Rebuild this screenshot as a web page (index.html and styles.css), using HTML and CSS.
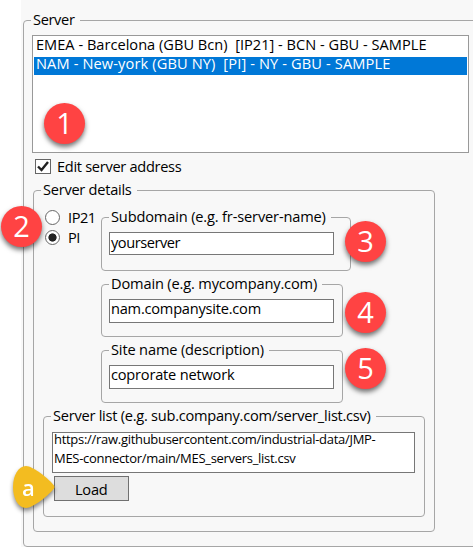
FILE: index.html
```
<!DOCTYPE html>
<html lang="en">
<head>
<meta charset="utf-8">
<title>Server</title>
<link rel="stylesheet" href="styles.css">
</head>
<body>
<main class="panel">
  <fieldset class="group server">
    <legend class="tight">Server</legend>
    <div class="listbox">
      <div class="row">EMEA - Barcelona (GBU Bcn)&nbsp; [IP21] - BCN - GBU - SAMPLE</div>
      <div class="row selected">NAM - New-york (GBU NY)&nbsp; [PI] - NY - GBU - SAMPLE</div>
    </div>
    <div class="check">
      <svg class="checkbox" width="16" height="15" viewBox="0 0 16 15"><rect x=".5" y=".5" width="15" height="14" fill="#fff" stroke="#666"/><path d="M3 7.5 6.5 11 13 3" fill="none" stroke="#222" stroke-width="2.4"/></svg>
      <span>Edit server address</span>
    </div>
    <fieldset class="group details">
      <legend>Server details</legend>
      <div class="columns">
        <div class="radios">
          <div class="option"><i class="radio"></i><span>IP21</span></div>
          <div class="option"><i class="radio on"></i><span>PI</span></div>
        </div>
        <div class="fields">
          <fieldset class="group subdomain">
            <legend>Subdomain (e.g. fr-server-name)</legend>
            <div class="input short">yourserver</div>
          </fieldset>
          <fieldset class="group field">
            <legend>Domain (e.g. mycompany.com)</legend>
            <div class="input host">nam.companysite.com</div>
          </fieldset>
          <fieldset class="group field">
            <legend>Site name (description)</legend>
            <div class="input">coprorate network</div>
          </fieldset>
        </div>
      </div>
      <fieldset class="group source">
        <legend>Server list (e.g. sub.company.com/server_list.csv)</legend>
        <div class="textarea"><div class="url">https://raw.githubusercontent.com/industrial-data/JMP-<br>MES-connector/main/MES_servers_list.csv</div></div>
        <div class="button">Load</div>
      </fieldset>
    </fieldset>
  </fieldset>
</main>
<span class="badge one">1</span>
<span class="badge two">2</span>
<span class="badge three">3</span>
<span class="badge four">4</span>
<span class="badge five">5</span>
<div class="marker">
  <svg width="42" height="42" viewBox="0 0 42 42"><path d="M13 0C20 0 36 13 41 19.500Q42 21 41 22.500C36 29 20 42 13 42C5 42 0 32 0 21S5 0 13 0Z" fill="#f3bc20"/></svg>
  <span>a</span>
</div>
</body>
</html>
```
FILE: styles.css
```
* { box-sizing: border-box; }
body {
  margin: 0;
  padding-left: 21px;
  position: relative;
  width: 473px;
  height: 547px;
  overflow: hidden;
  background: #fff;
  font: 14.6px/20px "Open Sans", "Noto Sans", sans-serif;
  letter-spacing: -.26px;
  color: #000;
}
.panel {
  width: 452px;
  height: 547px;
  padding: 10px 0 0 2px;
  background: #f8f8f8;
  overflow: hidden;
}
.group {
  min-width: 0;
  margin: 0;
  padding: 0 0 0 7px;
  border: 1px solid #a6a6a6;
  border-radius: 4px;
}
legend {
  height: 21px;
  padding: 0 5px 0 2px;
  line-height: 19px;
  white-space: nowrap;
}
.tight { letter-spacing: -.35px; }
.server { width: 470px; height: 537px; }
.listbox {
  width: 437px;
  height: 118px;
  margin: 4px 0 0 1px;
  padding: 1px;
  border: 1px solid #999;
  background: #fff;
  letter-spacing: .01px;
}
.row {
  height: 20px;
  padding-left: 2px;
  line-height: 15px;
  white-space: nowrap;
}
.selected {
  height: 18px;
  line-height: 13px;
  background: #0078d7;
  color: #fff;
  letter-spacing: .13px;
}
.check {
  display: flex;
  height: 27px;
  padding: 4px 0 0 4px;
  gap: 6px;
  line-height: 18px;
  letter-spacing: -.3px;
}
.checkbox { margin-top: 2px; }
.details {
  width: 402px;
  height: 352px;
  margin-left: 2px;
}
.columns { display: flex; height: 205px; }
.radios { width: 60px; padding: 7px 0 0 4px; }
.option { display: flex; height: 20px; gap: 8px; line-height: 18px; letter-spacing: -.45px; }
.radio {
  width: 15px;
  height: 15px;
  margin-top: 2px;
  border: 1px solid #666;
  border-radius: 50%;
  background: #fff;
}
.on { background: radial-gradient(circle, #222 3.7px, #fff 4.5px); }
.fields {
  display: flex;
  flex-direction: column;
  gap: 3px;
  padding-top: 6px;
}
.fields legend { letter-spacing: -.15px; }
.subdomain { width: 250px; height: 64px; }
.field { width: 242px; height: 63px; }
.input {
  width: 225px;
  height: 24px;
  margin-top: 4px;
  padding-left: 1px;
  border: 1px solid #777;
  background: #fff;
  line-height: 17px;
  letter-spacing: -.2px;
}
.short { height: 23px; line-height: 18px; letter-spacing: -.45px; }
.host { letter-spacing: -.22px; }
.source { width: 382px; height: 111px; margin-left: 2px; }
.source legend { letter-spacing: -.25px; }
.textarea {
  display: flow-root;
  width: 363px;
  height: 41px;
  margin: 5px 0 0 1px;
  padding-left: 1px;
  border: 1px solid #777;
  background: #fff;
}
.url {
  margin-top: -3px;
  font-size: 13px;
  line-height: 19px;
  letter-spacing: -.29px;
  white-space: nowrap;
}
.button {
  width: 75px;
  height: 25px;
  margin: 3px 0 0 3px;
  padding-left: 20px;
  border: 1px solid #707070;
  background: #ddd;
  line-height: 24px;
}
.badge {
  position: absolute;
  width: 41px;
  height: 41px;
  border-radius: 50%;
  background: #ff4343;
  color: #fff;
  box-shadow: 0 3px 5px rgba(0, 0, 0, .55);
  font: 29px/40px "Open Sans", sans-serif;
  letter-spacing: 0;
  text-align: center;
}
.one { left: 44px; top: 103px; }
.two { left: 1px; top: 206px; }
.three { left: 345px; top: 221px; }
.four { left: 345px; top: 292px; }
.five { left: 345px; top: 348px; }
.marker {
  position: absolute;
  left: 13px;
  top: 466px;
  width: 42px;
  height: 42px;
  filter: drop-shadow(0 3px 2px rgba(0, 0, 0, .45));
}
.marker svg { display: block; }
.marker span {
  position: absolute;
  left: 9px;
  top: 8px;
  color: #fff;
  font: 600 22px/26px "Open Sans", sans-serif;
  letter-spacing: 0;
}
```
